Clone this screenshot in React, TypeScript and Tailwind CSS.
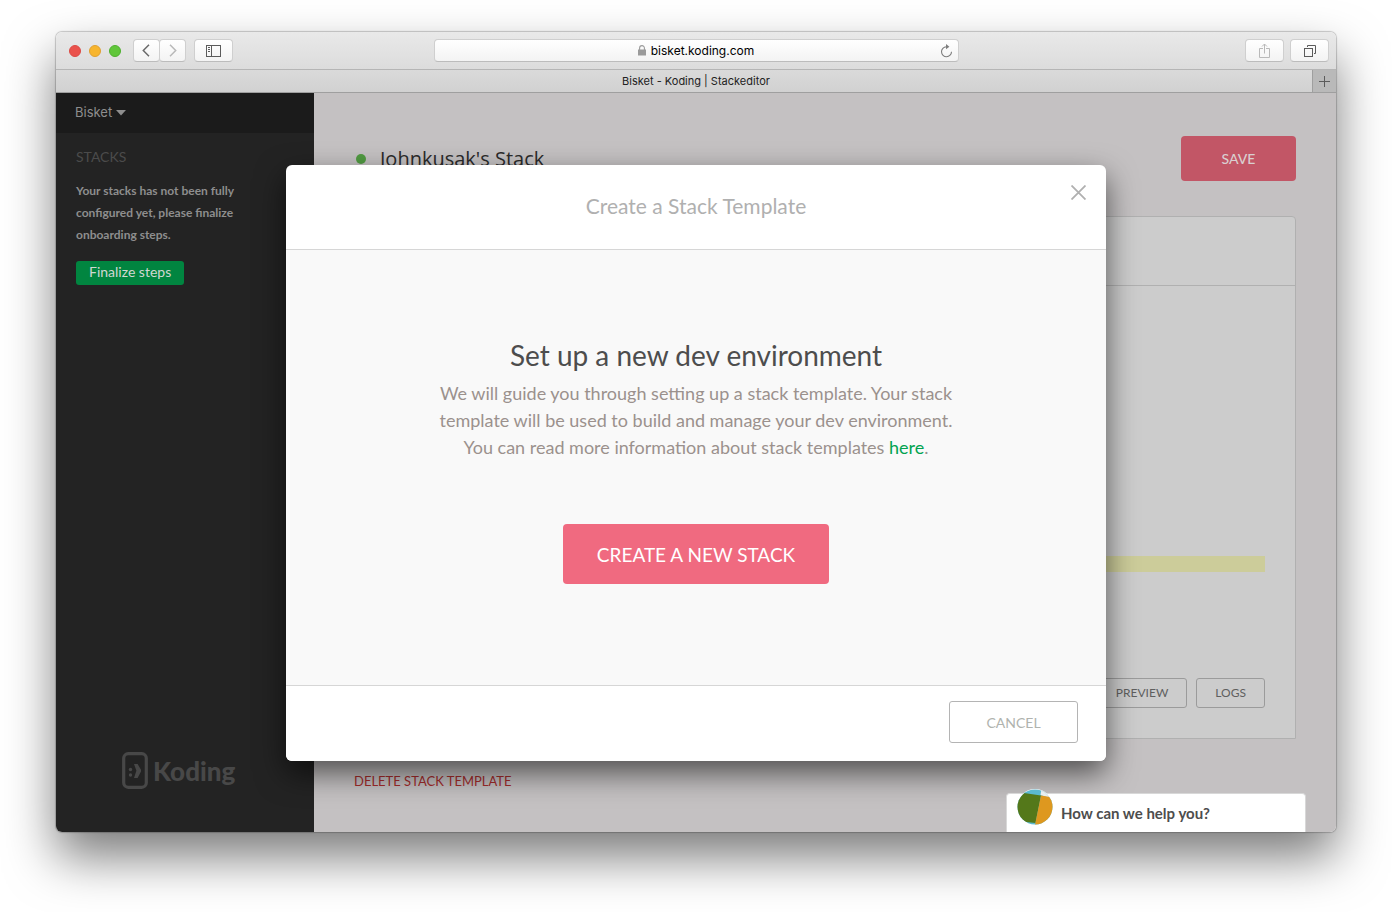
import type { ReactNode } from "react";

const toolButton =
  "flex h-[23px] items-center justify-center rounded border border-[#cfcfcf] border-b-[#bcbcbc] bg-linear-to-b from-white to-[#f3f3f3]";

function ToolButton({ label, className, children }: { label: string; className: string; children: ReactNode }) {
  return (
    <button type="button" aria-label={label} className={`${toolButton} ${className}`}>
      {children}
    </button>
  );
}

function Toolbar() {
  return (
    <div className="grid h-[38px] grid-cols-[1fr_minmax(0,525px)_1fr] items-center border-b border-[#b5b5b5] bg-linear-to-b from-[#e9e9e9] to-[#dcdcdc]">
      <div className="flex items-center pl-[13px]">
        <div className="flex gap-2 pr-3">
          <button type="button" aria-label="Close window" className="size-3 rounded-full border border-[#dc4a44] bg-[#ea524c]" />
          <button type="button" aria-label="Minimize window" className="size-3 rounded-full border border-[#e0a030] bg-[#f7b52e]" />
          <button type="button" aria-label="Zoom window" className="size-3 rounded-full border border-[#4eb02e] bg-[#60c63a]" />
        </div>
        <ToolButton label="Back" className="w-[27px]">
          <svg width="9" height="13" viewBox="0 0 9 13" fill="none" stroke="#6b6b6b" strokeWidth="1.5">
            <path d="M7 .7 1.300 6.500 7 12.300" />
          </svg>
        </ToolButton>
        <ToolButton label="Forward" className="-ml-px w-[27px]">
          <svg width="9" height="13" viewBox="0 0 9 13" fill="none" stroke="#b9b9b9" strokeWidth="1.5">
            <path d="m2 .7 5.700 5.800L2 12.300" />
          </svg>
        </ToolButton>
        <ToolButton label="Show sidebar" className="ml-2 w-[39px]">
          <svg width="15" height="12" viewBox="0 0 15 12" fill="none" stroke="#5b5b5b">
            <rect x=".5" y=".5" width="14" height="11" />
            <path d="M5.500 0v12M2 2.500h2M2 4.500h2M2 6.500h2" />
          </svg>
        </ToolButton>
      </div>
      <div className={`${toolButton} relative`}>
        <svg className="mr-[5px]" width="8" height="11" viewBox="0 0 8 11">
          <rect y="4.500" width="8" height="6" fill="#9a9a9a" />
          <path d="M1.600 5V3a2.400 2.400 0 0 1 4.800 0v2" fill="none" stroke="#9a9a9a" strokeWidth="1.1" />
        </svg>
        <input
          aria-label="Address"
          defaultValue="bisket.koding.com"
          className="field-sizing-content bg-transparent pt-px text-xs text-black outline-none"
        />
        <button type="button" aria-label="Reload page" className="absolute right-[5px]">
          <svg width="13" height="14" viewBox="0 0 13 14" fill="none" stroke="#7d7d7d" strokeWidth="1.1">
            <path d="M7 2.700H6.300a5 5 0 1 0 5.200 5" />
            <path d="M6 0 9.400 2.700 6 5.200z" fill="#7d7d7d" stroke="none" />
          </svg>
        </button>
      </div>
      <div className="flex justify-end gap-[6px] pr-[7px]">
        <ToolButton label="Share" className="w-[39px]">
          <svg width="11" height="15" viewBox="0 0 11 15" fill="none" stroke="#b9b9b9">
            <path d="M4 5.500H.5v9h10v-9H7M5.500 10.500V1M3 3.500 5.500 1 8 3.500" />
          </svg>
        </ToolButton>
        <ToolButton label="Show all tabs" className="w-[39px]">
          <svg width="12" height="12" viewBox="0 0 12 12" fill="none" stroke="#5b5b5b">
            <rect x=".5" y="3.500" width="8" height="8" />
            <path d="M3.500 2V.500h8v8H10" />
          </svg>
        </ToolButton>
      </div>
    </div>
  );
}

function TabBar() {
  return (
    <div className="flex h-[23px] border-b border-[#9f9f9f] bg-linear-to-b from-[#dadada] to-[#d1d1d1]">
      <button type="button" className="flex-1 pl-6 text-[11px] text-[#222]">
        Bisket - Koding | Stackeditor
      </button>
      <button
        type="button"
        aria-label="New tab"
        className="flex w-6 items-center justify-center border-l border-[#9f9f9f] bg-[#b9b9b9]"
      >
        <svg width="11" height="11" viewBox="0 0 11 11" stroke="#5b5b5b">
          <path d="M0 5.500h11M5.500 0v11" />
        </svg>
      </button>
    </div>
  );
}

function Sidebar() {
  return (
    <aside className="flex w-[258px] shrink-0 flex-col bg-[#232323] text-[#8e8e8e]">
      <button type="button" className="flex h-10 items-center gap-1 bg-[#1b1b1b] px-[19px] text-[13px]">
        Bisket
        <svg width="10" height="6" viewBox="0 0 10 6" fill="currentColor">
          <path d="M0 0h10L5 5.500z" />
        </svg>
      </button>
      <div className="px-5 pt-[14px] font-[Lato]">
        <h2 className="text-sm text-[#4b4b4b]">STACKS</h2>
        <p className="mt-[13px] max-w-[176px] text-xs leading-[22px] font-bold">
          Your stacks has not been fully configured yet, please finalize onboarding steps.
        </p>
        <button type="button" className="mt-[15px] h-6 rounded-[3px] bg-[#018540] px-[13px] pb-[2px] text-sm text-[#d0d8d2]">
          Finalize steps
        </button>
      </div>
      <div className="mt-auto flex items-center gap-[5px] px-[66px] pb-[43px] text-[#484848]">
        <svg width="26" height="37" viewBox="0 0 26 37" fill="none" stroke="currentColor">
          <rect x="1.700" y="1.700" width="22.600" height="33.600" rx="4.500" strokeWidth="3.200" />
          <path d="M12 12h3.600l3.400 5.800v1.600L15.600 26H12l2.400-7.200z" fill="currentColor" stroke="none" />
          <circle cx="8.500" cy="17.500" r="1.700" fill="currentColor" stroke="none" />
          <circle cx="8.500" cy="23" r="1.700" fill="currentColor" stroke="none" />
        </svg>
        <span className="font-[Lato] text-[26px] leading-9 font-black">Koding</span>
      </div>
    </aside>
  );
}

function StackEditor() {
  const outline = "h-[30px] rounded-[3px] border border-[#9b9b9b] px-[18px] text-xs text-[#5f5f5f]";
  return (
    <main className="flex min-w-0 flex-1 flex-col bg-[#c4c1c2] px-10 pt-[43px] pb-10 font-[Lato]">
      <header className="flex items-center justify-between">
        <h1 className="flex items-center gap-[14px] pl-[2px] font-['Open_Sans'] text-xl text-[#2b2b2b]">
          <span className="size-[10px] rounded-full bg-[#519b42]" />
          Johnkusak's Stack
        </h1>
        <button type="button" className="h-[45px] w-[115px] rounded bg-[#c25666] text-sm font-medium text-[#d9cfd0]">
          SAVE
        </button>
      </header>
      <section className="mt-[35px] flex flex-1 flex-col rounded-t border border-[#b0b0b0] bg-[#ccc]">
        <div className="h-[69px] border-b border-[#b0b0b0]" />
        <div className="flex flex-1 flex-col justify-end px-[30px] pb-[30px]">
          <div className="h-4 bg-[#cccc9a]" />
          <div className="mt-[106px] flex justify-end gap-[9px]">
            <button type="button" className={outline}>PREVIEW</button>
            <button type="button" className={outline}>LOGS</button>
          </div>
        </div>
      </section>
      <a href="#delete" className="mt-[31px] self-start text-[13px] leading-[22px] text-[#a32c2c]">
        DELETE STACK TEMPLATE
      </a>
    </main>
  );
}

function StackDialog() {
  return (
    <div
      role="dialog"
      aria-labelledby="dialog-title"
      className="absolute inset-x-0 top-[72px] mx-auto w-full max-w-[820px] overflow-hidden rounded-md bg-white font-[Lato] shadow-[0_12px_30px_rgba(0,0,0,0.6)]"
    >
      <header className="relative flex h-[85px] items-center justify-center border-b border-[#d6d6d6] pb-[2px]">
        <h2 id="dialog-title" className="text-[21px] text-[#b0b0b0]">
          Create a Stack Template
        </h2>
        <button type="button" aria-label="Close" className="absolute top-5 right-5">
          <svg width="15" height="15" viewBox="0 0 15 15" stroke="#b0b0b0" strokeWidth="1.800">
            <path d="m.5.5 14 14M14.500.5l-14 14" />
          </svg>
        </button>
      </header>
      <div className="flex flex-col items-center bg-[#f9f9f9] px-8 pt-[85px] pb-[101px] text-center">
        <h3 className="text-[28px] leading-10 text-[#4d4d4d]">Set up a new dev environment</h3>
        <p className="mt-[5px] max-w-[540px] text-lg leading-[27px] text-[#9b918d]">
          We will guide you through setting up a stack template. Your stack template will be used to build and manage
          your dev environment. You can read more information about stack templates{" "}
          <a href="#docs" className="text-[#02a350]">here</a>.
        </p>
        <button type="button" className="mt-[63px] h-[60px] w-[266px] rounded bg-[#f06a80] pt-[2px] text-[19px] text-white">
          CREATE A NEW STACK
        </button>
      </div>
      <footer className="flex justify-end border-t border-[#d6d6d6] bg-white px-7 pt-[15px] pb-[18px]">
        <button type="button" className="h-[42px] w-[129px] rounded-[3px] border border-[#b4b4b4] pt-[2px] text-sm text-[#b0b3ae]">
          CANCEL
        </button>
      </footer>
    </div>
  );
}

function HelpChat() {
  return (
    <button
      type="button"
      className="absolute right-[30px] bottom-0 flex h-[39px] w-[300px] items-center gap-2 rounded-t border border-b-0 border-[#d8d8d8] bg-white px-[10px] font-[Lato] text-[15px] font-bold text-[#4d4d4d]"
    >
      <svg className="-mt-3" width="36" height="36" viewBox="0 0 36 36">
        <defs>
          <clipPath id="avatar">
            <circle cx="18" cy="18" r="17.500" />
          </clipPath>
        </defs>
        <circle cx="18" cy="18" r="18" fill="#fff" />
        <g clipPath="url(#avatar)">
          <path d="M0 0h36v36H0z" fill="#5bb9d0" />
          <path d="M24.500 0H36v10L23.500 6z" fill="#e9eef0" />
          <path d="M0 3 24 6.500 18.500 34 0 32z" fill="#54781a" />
          <path d="M24 6.500 36 8.500V36H18z" fill="#de981f" />
        </g>
      </svg>
      How can we help you?
    </button>
  );
}

export default function App() {
  return (
    <div className="flex min-h-screen bg-white px-14 pt-8 pb-20 font-[Inter,sans-serif]">
      <div className="flex flex-1 flex-col rounded-md shadow-[0_0_1px_1px_rgba(0,0,0,0.2),0_25px_50px_rgba(0,0,0,0.52)]">
        <div className="flex flex-1 flex-col overflow-hidden rounded-md">
          <Toolbar />
          <TabBar />
          <div className="relative flex flex-1 overflow-hidden">
            <Sidebar />
            <StackEditor />
            <StackDialog />
            <HelpChat />
          </div>
        </div>
      </div>
    </div>
  );
}
